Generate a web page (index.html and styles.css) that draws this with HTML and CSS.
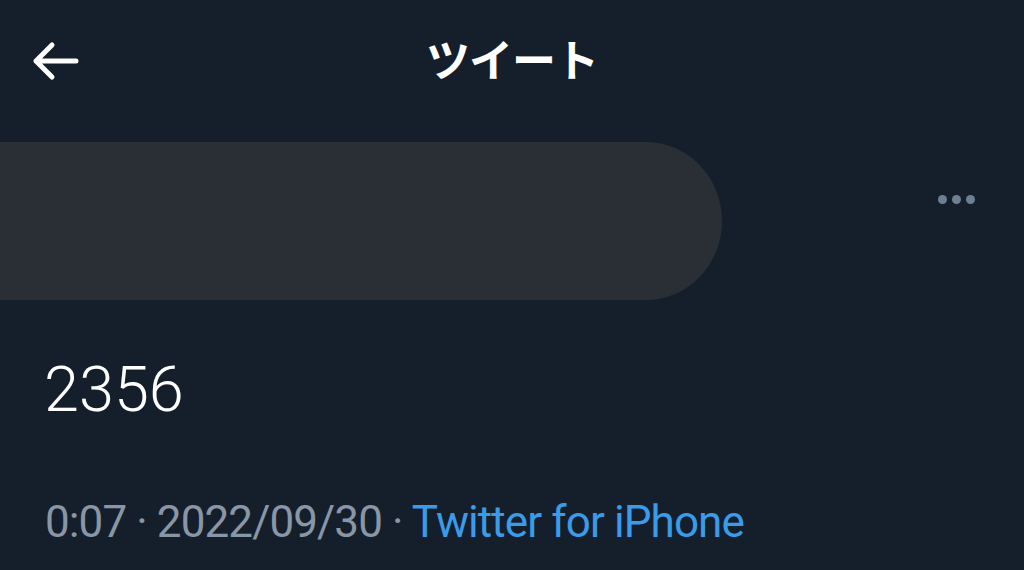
FILE: index.html
```html
<!DOCTYPE html>
<html lang="ja">
<head>
    <meta charset="UTF-8">
    <meta name="viewport" content="width=device-width, initial-scale=1.0">
    <title>ツイート</title>
    <link rel="stylesheet" href="styles.css">
</head>
<body>
    <header class="topbar">
        <button class="back_btn" aria-label="戻る">
            <svg width="50" height="40" viewBox="0 0 50 40">
                <path d="M46 20H6M22 4L6 20l16 16" fill="none" stroke="#fff" stroke-width="5" stroke-linecap="round" stroke-linejoin="round"/>
            </svg>
        </button>
        <h1 class="topbar_title">ツイート</h1>
    </header>

    <div class="author">
        <div class="author_pill"></div>
        <div class="author_more" aria-label="その他">
            <span></span><span></span><span></span>
        </div>
    </div>

    <p class="tweet_text">2356</p>

    <p class="tweet_meta">0:07 · 2022/09/30 · <a href="#">Twitter for iPhone</a></p>
</body>
</html>
```

FILE: styles.css
```css
*{
    box-sizing: border-box;
    margin: 0;
    padding: 0;
}

body{
    background-color: #151f2c;
    color: #fff;
    font-family: Roboto, "Noto Sans CJK JP", sans-serif;
    width: 1024px;
    height: 570px;
    overflow: hidden;
}

.topbar{
    height: 122px;
    display: flex;
    align-items: center;
    justify-content: center;
    position: relative;
    padding-bottom: 6px;
}

.back_btn{
    position: absolute;
    left: 30px;
    top: 41px;
    background: none;
    border: none;
    display: flex;
}

.topbar_title{
    font-family: "Noto Sans CJK JP", sans-serif;
    font-size: 44px;
    font-weight: 700;
    letter-spacing: -1px;
}

.author{
    display: flex;
    align-items: center;
    height: 158px;
    margin-top: 20px;
}

.author_pill{
    width: 722px;
    height: 158px;
    background-color: #2a2f35;
    border-radius: 0 76px 76px 0 / 0 79px 79px 0;
}

.author_more{
    display: flex;
    gap: 5px;
    margin-left: auto;
    margin-right: 49px;
    margin-top: -44px;
}

.author_more span{
    width: 9px;
    height: 9px;
    border-radius: 50%;
    background-color: #6e7f94;
}

.tweet_text{
    font-size: 63px;
    font-weight: 300;
    margin: 50px 0 0 44px;
    line-height: 80px;
}

.tweet_meta{
    font-size: 44px;
    letter-spacing: -0.9px;
    color: #8896a5;
    margin: 64px 0 0 45px;
    line-height: 56px;
}

.tweet_meta a{
    color: #3a9be8;
    text-decoration: none;
}
```
